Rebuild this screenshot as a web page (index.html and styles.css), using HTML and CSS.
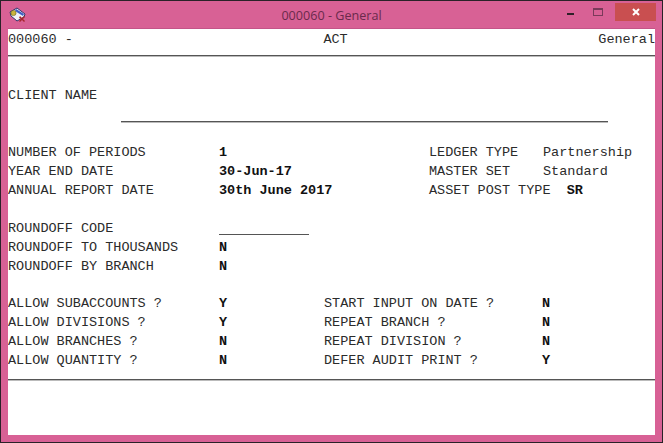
FILE: index.html
```html
<!DOCTYPE html>
<html lang="en">
<head>
    <meta charset="UTF-8">
    <title>000060 - General</title>
    <link rel="stylesheet" href="styles.css">
</head>
<body>
    <div class="window">
        <div class="titlebar">
            <svg class="app-icon" width="18" height="18" viewBox="0 0 18 18">
                <path d="M1 6 L8 2 L16 8 L15 11 L8 15 L2 10 Z" fill="#f2f2f8" stroke="#33356b"/>
                <path d="M7 3 L15 8 L14 10 L6 5 Z" fill="#3f5fc4"/>
                <circle cx="4.5" cy="7" r="2.6" fill="#c9b53c" stroke="#6d6420" stroke-width=".6"/>
                <path d="M10 12 L11 10 L13 12 L15 10 L16 11 L14 13 L16 15 L15 16 L13 14 L11 16 L10 15 L12 13 Z" fill="#a8242c"/>
            </svg>
            <div class="title">000060 - General</div>
            <div class="controls">
                <span class="btn-min"></span>
                <span class="btn-max"></span>
                <span class="btn-close">
                    <svg width="10" height="10" viewBox="0 0 10 10"><path d="M2 2 L8 8 M8 2 L2 8" stroke="#fff" stroke-width="2"/></svg>
                </span>
            </div>
        </div>

        <div class="client">
            <div class="header">
                <span>000060 -</span>
                <span class="header-mid">ACT</span>
                <span>General</span>
            </div>

            <div class="rule"></div>

            <div class="client-name">CLIENT NAME</div>
            <div class="name-line"></div>

            <div class="row row-first">
                <span class="label">NUMBER OF PERIODS</span><b class="value">1</b>
                <span class="label2">LEDGER TYPE</span><span class="plain">Partnership</span>
            </div>
            <div class="row">
                <span class="label">YEAR END DATE</span><b class="value">30-Jun-17</b>
                <span class="label2">MASTER SET</span><span class="plain">Standard</span>
            </div>
            <div class="row">
                <span class="label">ANNUAL REPORT DATE</span><b class="value">30th June 2017</b>
                <span class="label2 wide">ASSET POST TYPE <b class="sr">SR</b></span>
            </div>

            <div class="row row-group">
                <span class="label">ROUNDOFF CODE</span><span class="code-line"></span>
            </div>
            <div class="row">
                <span class="label">ROUNDOFF TO THOUSANDS</span><b class="value">N</b>
            </div>
            <div class="row">
                <span class="label">ROUNDOFF BY BRANCH</span><b class="value">N</b>
            </div>

            <div class="row row-group row-allow">
                <span class="label">ALLOW SUBACCOUNTS ?</span><b class="value short">Y</b>
                <span class="label3">START INPUT ON DATE ?</span><b>N</b>
            </div>
            <div class="row">
                <span class="label">ALLOW DIVISIONS ?</span><b class="value short">Y</b>
                <span class="label3">REPEAT BRANCH ?</span><b>N</b>
            </div>
            <div class="row">
                <span class="label">ALLOW BRANCHES ?</span><b class="value short">N</b>
                <span class="label3">REPEAT DIVISION ?</span><b>N</b>
            </div>
            <div class="row">
                <span class="label">ALLOW QUANTITY ?</span><b class="value short">N</b>
                <span class="label3">DEFER AUDIT PRINT ?</span><b>Y</b>
            </div>

            <div class="rule rule-bottom"></div>
        </div>
    </div>
</body>
</html>
```

FILE: styles.css
```css
html, body {
    margin: 0;
    padding: 0;
}
body {
    width: 663px;
    height: 443px;
    overflow: hidden;
    background-color: #d86195;
}
.window {
    box-sizing: border-box;
    width: 663px;
    height: 443px;
    display: flex;
    flex-direction: column;
    background-color: #d86195;
    border: 1px solid #2a2228;
    padding: 0 7px 7px 7px;
}
.titlebar {
    position: relative;
    height: 27px;
    flex: none;
    display: flex;
    align-items: center;
    justify-content: center;
    border-bottom: 1px solid #c45488;
}
.app-icon {
    position: absolute;
    left: 1px;
    top: 5px;
}
.title {
    font-family: "Open Sans", "Noto Sans", sans-serif;
    font-size: 12.6px;
    color: #6a2a4c;
    padding-top: 1px;
}
.controls {
    position: absolute;
    right: -1px;
    top: 2px;
    display: flex;
    align-items: flex-start;
}
.btn-min {
    width: 7px;
    height: 2px;
    background-color: #2f2028;
    margin: 10px 19px 0 0;
}
.btn-max {
    box-sizing: border-box;
    width: 10px;
    height: 8px;
    border: 1px solid #7a3a5a;
    border-top-width: 2px;
    margin: 5px 12px 0 0;
}
.btn-close {
    width: 41px;
    height: 18px;
    background-color: #c94f50;
    display: flex;
    align-items: center;
    justify-content: center;
}
.client {
    flex: 1;
    background-color: #fff;
    color: #2b2b2b;
    font-family: "Liberation Mono", monospace;
    font-size: 13.5px;
    line-height: 19px;
    overflow: hidden;
}
.client b {
    color: #111;
}
.header {
    display: flex;
    justify-content: space-between;
    padding-top: 1px;
    height: 25px;
}
.rule {
    height: 1px;
    background-color: #555;
    border-bottom: 1px solid #bbb;
}
.client-name {
    margin-top: 29px;
}
.name-line {
    height: 1px;
    margin: 16px 47px 0 113px;
    background-color: #555;
    border-bottom: 1px solid #bbb;
}
.row {
    display: flex;
    height: 19px;
    white-space: pre;
}
.row-first {
    margin-top: 20px;
}
.row-group {
    margin-top: 19px;
}
.row-allow {
    margin-top: 18px;
}
.label {
    width: 211px;
    flex: none;
}
.value {
    width: 210px;
    flex: none;
}
.value.short {
    width: 105px;
}
.label2 {
    width: 114px;
    flex: none;
}
.label2.wide {
    width: auto;
}
.sr {
    margin-left: 8px;
}
.label3 {
    width: 218px;
    flex: none;
}
.code-line {
    width: 90px;
    height: 1px;
    margin-top: 15px;
    background-color: #555;
}
.rule-bottom {
    margin-top: 9px;
}
```
